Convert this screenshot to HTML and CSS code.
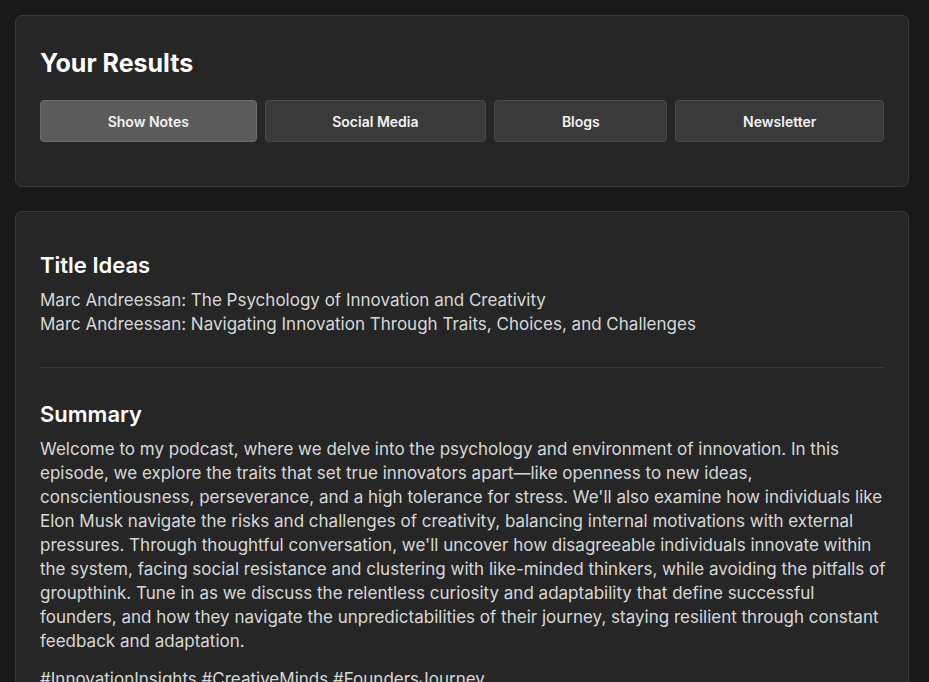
FILE: index.html
```html
<!DOCTYPE html>
<html lang="en">
<head>
  <meta charset="UTF-8" />
  <meta name="viewport" content="width=device-width, initial-scale=1.0"/>
  <title>Your Results</title>
  <link rel="stylesheet" href="styles.css">
</head>
<body>
  <div class="pagina">
    <section class="tarjeta resultados">
      <h1>Your Results</h1>
      <div class="pestanas">
        <button class="pestana activa">Show Notes</button>
        <button class="pestana">Social Media</button>
        <button class="pestana">Blogs</button>
        <button class="pestana">Newsletter</button>
      </div>
    </section>

    <section class="tarjeta contenido">
      <div class="bloque">
        <h2>Title Ideas</h2>
        <p>Marc Andreessan: The Psychology of Innovation and Creativity<br>
        Marc Andreessan: Navigating Innovation Through Traits, Choices, and Challenges</p>
      </div>

      <hr class="separador">

      <div class="bloque">
        <h2>Summary</h2>
        <p>Welcome to my podcast, where we delve into the psychology and environment of innovation. In this episode, we explore the traits that set true innovators apart—like openness to new ideas, conscientiousness, perseverance, and a high tolerance for stress. We'll also examine how individuals like Elon Musk navigate the risks and challenges of creativity, balancing internal motivations with external pressures. Through thoughtful conversation, we'll uncover how disagreeable individuals innovate within the system, facing social resistance and clustering with like-minded thinkers, while avoiding the pitfalls of groupthink. Tune in as we discuss the relentless curiosity and adaptability that define successful founders, and how they navigate the unpredictabilities of their journey, staying resilient through constant feedback and adaptation.</p>
        <p>#InnovationInsights #CreativeMinds #FoundersJourney</p>
      </div>
    </section>
  </div>
</body>
</html>
```

FILE: styles.css
```css
body {
  font-family: Inter, "Noto Sans", sans-serif;
  margin: 0; padding: 0;
  background: #191919;
  color: #d8d8d8;
}
.pagina {
  padding: 15px 20px 15px 15px;
  display: flex;
  flex-direction: column;
  gap: 24px;
}
.tarjeta {
  background: #262626;
  border: 1px solid #3a3a3a;
  border-radius: 7px;
  padding: 24px;
}
.resultados h1 {
  margin: 8px 0 22px;
  font-size: 25px;
  font-weight: 700;
  color: #fff;
}
.pestanas {
  display: flex;
  gap: 8px;
  margin-bottom: 20px;
}
.pestana {
  flex: 1 1 auto;
  height: 42px;
  background: #3a3a3a;
  border: 1px solid #4a4a4a;
  border-radius: 4px;
  color: #f2f2f2;
  font-family: inherit;
  font-size: 14px;
  font-weight: 600;
  cursor: pointer;
}
.pestana.activa {
  background: #5b5b5b;
  border-color: #6e6e6e;
}
.contenido {
  padding: 40px 21px 24px 24px;
}
h2 {
  margin: 0 0 10px;
  font-size: 22px;
  font-weight: 600;
  color: #fff;
}
.contenido p {
  margin: 0 0 14px;
  font-size: 17px;
  line-height: 24px;
}
.separador {
  border: none;
  border-top: 1px solid #3a3a3a;
  margin: 31px 3px 33px 0;
}
```
